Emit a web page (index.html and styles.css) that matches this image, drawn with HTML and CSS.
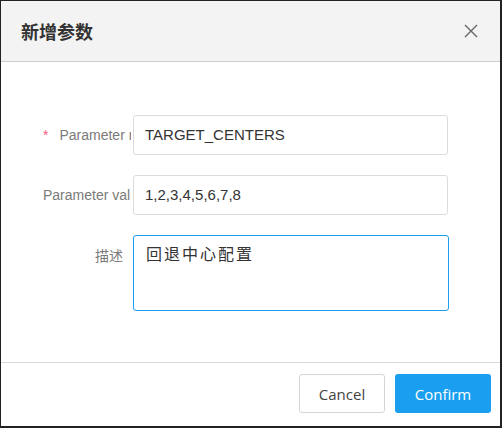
FILE: index.html
```html
<!DOCTYPE html>
<html lang="zh">
<head>
<meta charset="utf-8">
<link rel="stylesheet" href="styles.css">
</head>
<body>
<div class="dialog">
  <div class="header">
    <div class="title">新增参数</div>
    <svg class="close" width="14" height="14" viewBox="0 0 14 14"><path d="M1 1L13 13M13 1L1 13" stroke="#666" stroke-width="1.4" fill="none"/></svg>
  </div>
  <div class="body">
    <div class="row">
      <div class="label"><span class="star">*</span>Parameter name</div>
      <div class="input">TARGET_CENTERS</div>
    </div>
    <div class="row">
      <div class="label">Parameter value</div>
      <div class="input">1,2,3,4,5,6,7,8</div>
    </div>
    <div class="row">
      <div class="label right">描述</div>
      <div class="input area">回退中心配置</div>
    </div>
  </div>
  <div class="footer">
    <div class="btn cancel">Cancel</div>
    <div class="btn confirm">Confirm</div>
  </div>
</div>
</body>
</html>
```
FILE: styles.css
```css
html, body { margin: 0; padding: 0; }
body {
  background: #222;
  width: 502px;
  height: 428px;
  overflow: hidden;
  font-family: "Liberation Sans", "Noto Sans CJK SC", sans-serif;
}
.dialog {
  margin: 1px 0 0 1px;
  width: 499px;
  height: 425px;
  background: #fff;
  display: flex;
  flex-direction: column;
}
.header {
  height: 60px;
  background: #f3f3f3;
  border-bottom: 1px solid #cfcfcf;
  display: flex;
  align-items: center;
  justify-content: space-between;
  padding: 0 22px 0 20px;
}
.title {
  font-family: "Noto Sans CJK SC", sans-serif;
  font-weight: bold;
  font-size: 18px;
  color: #333;
}
.close { display: block; }
.body {
  flex: 1;
  padding-top: 53px;
  display: flex;
  flex-direction: column;
  gap: 20px;
}
.row {
  display: flex;
  align-items: flex-start;
}
.label {
  width: 80px;
  margin-left: 42px;
  margin-right: 2px;
  padding-right: 8px;
  height: 40px;
  line-height: 40px;
  font-size: 14px;
  color: #7a7a7a;
  white-space: nowrap;
  overflow: hidden;
  text-align: right;
}
.label.right { text-align: right; font-family: "Noto Sans CJK SC", sans-serif; }
.star { color: #f2627f; margin-right: 11px; }
.input {
  width: 302px;
  height: 38px;
  line-height: 38px;
  border: 1px solid #dcdcdc;
  border-radius: 3px;
  padding: 0 0 0 11px;
  font-size: 15px;
  color: #333;
}
.input.area {
  line-height: 22px;
  padding-top: 6px;
  height: 68px;
  border-color: #1a9ff0;
  font-family: "Noto Sans CJK SC", sans-serif;
  font-size: 16px;
  letter-spacing: 2px;
  padding-left: 12px;
}
.footer {
  height: 64px;
  border-top: 1px solid #d8d8d8;
  display: flex;
  justify-content: flex-end;
  align-items: flex-start;
  padding: 11px 9px 0 0;
  gap: 10px;
  box-sizing: border-box;
  font-family: "Open Sans", sans-serif;
}
.btn {
  height: 39px;
  line-height: 41px;
  border-radius: 3px;
  font-size: 15px;
  text-align: center;
  box-sizing: border-box;
}
.cancel {
  width: 86px;
  border: 1px solid #d5d5d5;
  color: #444;
  line-height: 39px;
}
.confirm {
  width: 96px;
  background: #1a9ff0;
  color: #fff;
}
```
